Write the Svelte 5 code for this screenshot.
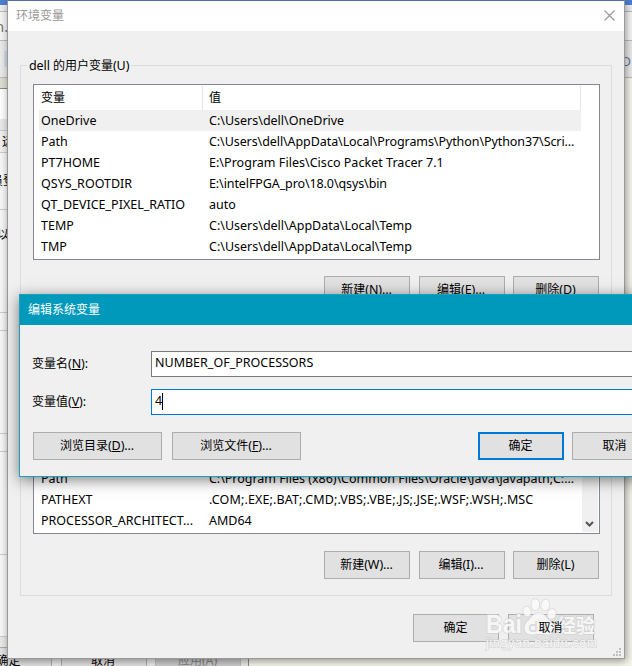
<script lang="ts">
	interface Variable {
		name: string;
		value: string;
		tracking?: number;
	}

	const userVars: Variable[] = [
		{ name: "OneDrive", value: "C:\\Users\\dell\\OneDrive" },
		{
			name: "Path",
			value: "C:\\Users\\dell\\AppData\\Local\\Programs\\Python\\Python37\\Scri...",
			tracking: -0.08,
		},
		{
			name: "PT7HOME",
			value: "E:\\Program Files\\Cisco Packet Tracer 7.1",
			tracking: 0.03,
		},
		{
			name: "QSYS_ROOTDIR",
			value: "E:\\intelFPGA_pro\\18.0\\qsys\\bin",
			tracking: -0.1,
		},
		{ name: "QT_DEVICE_PIXEL_RATIO", value: "auto" },
		{ name: "TEMP", value: "C:\\Users\\dell\\AppData\\Local\\Temp" },
		{ name: "TMP", value: "C:\\Users\\dell\\AppData\\Local\\Temp" },
	];

	const systemVars: Variable[] = [
		{
			name: "Path",
			value: "C:\\Program Files (x86)\\Common Files\\Oracle\\Java\\javapath;C:...",
			tracking: -0.03,
		},
		{
			name: "PATHEXT",
			value: ".COM;.EXE;.BAT;.CMD;.VBS;.VBE;.JS;.JSE;.WSF;.WSH;.MSC",
			tracking: 0.12,
		},
		{ name: "PROCESSOR_ARCHITECT...", value: "AMD64" },
	];

	let selected: number = $state(0);
</script>

{#snippet row(item: Variable)}
	<span class="cell name">{item.name}</span>
	<span class="cell" style="letter-spacing: {item.tracking ?? 0}px">
		{item.value}
	</span>
{/snippet}

<div class="screen">
	<div class="backdrop left">
		<div class="strip blue"></div>
		<div class="strip address">n.</div>
		<div class="strip tabs"><span class="chip"></span></div>
		<div class="strip olive"></div>
		<div class="strip caption"></div>
		<div class="strip grey"></div>
		<div class="strip tab">远</div>
		<div class="strip login">员登</div>
		<div class="strip allow">以</div>
		<div class="strip line space"></div>
		<div class="strip line gap"></div>
		<div class="strip line panel"></div>
		<div class="strip line gap"></div>
		<div class="strip line panel"></div>
		<div class="strip line rest"></div>
	</div>
	<div class="backdrop right">
		<div class="strip blue"></div>
		<div class="strip address"></div>
		<div class="strip tabs letter">D</div>
	</div>
	<div class="under">
		<button class="btn">确定</button>
		<button class="btn">取消</button>
		<button class="btn disabled">应用<i>(A)</i></button>
	</div>

	<div class="dialog">
		<header class="title">
			<span>环境变量</span>
			<svg width="11" height="11" viewBox="0 0 11 11">
				<path d="M.5 .5L10.500 10.500M10.500 .5L.5 10.500" stroke="#999" stroke-width="1.200" fill="none" />
			</svg>
		</header>
		<section class="group user">
			<h2><i>dell&nbsp;</i>的用户变量<i>(U)</i></h2>
			<div class="list">
				<div class="row head">
					<span class="cell name">变量</span>
					<span class="cell">值</span>
				</div>
				{#each userVars as item, i}
					<div
						class="row"
						class:selected={i === selected}
						role="presentation"
						onclick={() => (selected = i)}
					>
						{@render row(item)}
					</div>
				{/each}
			</div>
			<div class="actions">
				<button class="btn">新建<i>(N)...</i></button>
				<button class="btn">编辑<i>(E)...</i></button>
				<button class="btn">删除<i>(D)</i></button>
			</div>
		</section>
		<section class="group system">
			<div class="list scrolled">
				{#each systemVars as item}
					<div class="row">{@render row(item)}</div>
				{/each}
				<div class="scrollbar">
					<svg width="9" height="7" viewBox="0 0 9 7">
						<path d="M1 1L4.500 4.500L8 1" stroke="#555" stroke-width="2" fill="none" />
					</svg>
				</div>
			</div>
			<div class="actions">
				<button class="btn">新建<i>(W)...</i></button>
				<button class="btn">编辑<i>(I)...</i></button>
				<button class="btn">删除<i>(L)</i></button>
			</div>
		</section>
		<footer class="confirm">
			<button class="btn">确定</button>
			<button class="btn"><span class="above">取消</span></button>
		</footer>
		<svg class="grip" width="8" height="8" viewBox="0 0 8 8" fill="#bfbfbf">
			<path d="M6 0h2v2h-2zM3 3h2v2h-2zM6 3h2v2h-2zM0 6h2v2h-2zM3 6h2v2h-2zM6 6h2v2h-2z" />
		</svg>
	</div>

	<svg class="watermark" width="124" height="60" viewBox="0 0 124 60">
		<g fill="#fbfbfb" stroke="#d2d2d2" stroke-width="1.400" paint-order="stroke">
			<ellipse cx="42" cy="17.500" rx="3.800" ry="5" transform="rotate(-12 42 17.500)" />
			<ellipse cx="50.300" cy="10.500" rx="4" ry="5.500" />
			<ellipse cx="60.300" cy="11" rx="4" ry="5.500" transform="rotate(8 60 11)" />
			<ellipse cx="66.700" cy="20" rx="4" ry="5" transform="rotate(18 67 20)" />
			<path
				d="M54 19C48 19 46 24 42 28C38 32 39 40 45 40.500C49 41 51 40 55 40C60 40 63 41.500 67 39.500C72 36 70 31 66 28C61 25 60 19 54 19Z"
			/>
			<path
				d="M51 27V37H47C44 37 44 31 47 31H51M55 31V37H60V31"
				fill="none"
				stroke="#ddd"
				stroke-width="1.800"
			/>
			<text class="brand" x="1" y="39" textLength="36" lengthAdjust="spacingAndGlyphs">Bai</text>
			<text class="brand cn" x="72" y="39" textLength="38">经验</text>
			<text class="site" x="1" y="53" textLength="111">jingyan.baidu.com</text>
		</g>
	</svg>

	<div class="modal">
		<header>编辑系统变量</header>
		<div class="field">
			<span class="label">变量名<i>(<u>N</u>):</i></span>
			<div class="input">NUMBER_OF_PROCESSORS</div>
		</div>
		<div class="field">
			<span class="label">变量值<i>(<u>V</u>):</i></span>
			<div class="input focused">4<span class="caret"></span></div>
		</div>
		<div class="buttons">
			<button class="btn wide">浏览目录<i>(<u>D</u>)...</i></button>
			<button class="btn wide">浏览文件<i>(<u>F</u>)...</i></button>
			<button class="btn primary">确定</button>
			<button class="btn">取消</button>
		</div>
	</div>
</div>

<style>
	:global(body) {
		margin: 0;
		overflow: hidden;
	}

	.screen {
		position: relative;
		width: 632px;
		height: 666px;
		overflow: hidden;
		background: #f5f5eb;
		color: #000;
		font-family: "Noto Sans", "Noto Sans CJK SC", sans-serif;
		font-size: 12px;
		line-height: 16px;
	}

	.screen :global(*) {
		box-sizing: border-box;
	}

	i {
		font-style: normal;
		font-size: 12.5px;
		letter-spacing: -0.1px;
		white-space: pre;
	}

	u {
		text-underline-offset: 1px;
	}

	.backdrop {
		position: absolute;
		top: 0;
		width: 8px;
		height: 666px;
		overflow: hidden;
	}

	.left {
		left: 0;
		background: #f7f7f7;
	}

	.right {
		right: 0;
	}

	.strip {
		display: flex;
		justify-content: flex-start;
		align-items: center;
		white-space: nowrap;
	}

	.line {
		border-bottom: 1px solid #ccc;
	}

	.blue {
		height: 5px;
		background: #4b7fd0;
	}

	.address {
		height: 36px;
		border-bottom: 1px solid #bbb;
		background: linear-gradient(#eee 6px, #bbb 6px, #bbb 7px, #f5f5f5 7px);
		color: #777;
		font-size: 15px;
		text-indent: -5px;
		padding-top: 7px;
	}

	.tabs {
		height: 37px;
		border-bottom: 1px solid #bbb;
		background: #eaeaea;
	}

	.chip {
		width: 4px;
		height: 16px;
		margin-left: 4px;
		background: #d3d9e8;
	}

	.letter {
		padding: 3px 1px 0 0;
		justify-content: flex-end;
		color: #5b7599;
		font-size: 13px;
	}

	.olive {
		height: 11px;
		background: #dedfd3;
		border-bottom: 1px solid #888;
	}

	.caption {
		height: 30px;
		background: #fff;
	}

	.grey {
		height: 11px;
		background: #e9e9e9;
	}

	.tab {
		height: 23px;
		border: solid #ccc;
		border-width: 1px 0;
		padding-left: 2px;
		background: #f0f0f0;
	}

	.login {
		height: 57px;
		border-bottom: 1px solid #ccc;
		text-indent: -9px;
	}

	.allow {
		height: 50px;
		text-indent: -3px;
	}

	.space {
		height: 53px;
	}

	.gap {
		height: 18px;
	}

	.panel {
		height: 103px;
	}

	.rest {
		height: 82px;
	}

	.under {
		position: absolute;
		left: -34px;
		bottom: -10px;
		display: flex;
		gap: 8.5px;
		width: 283px;
		height: 39px;
		padding-top: 10px;
		background: #e9e9e9;
		border-right: 1px solid #888;
	}

	.dialog {
		position: absolute;
		left: 7px;
		top: 0;
		width: 618px;
		height: 659px;
		display: flex;
		flex-direction: column;
		background: #f0f0f0;
		border: 1px solid #999;
		border-top-color: #4f6fa5;
		box-shadow: 1px 2px 8px rgba(0, 0, 0, 0.4);
	}

	.title {
		display: flex;
		justify-content: space-between;
		align-items: center;
		height: 30px;
		padding: 0 9px 1px 8px;
		background: #fff;
		color: #999;
	}

	.group {
		margin: 34px 12px 0 12px;
		padding: 0 12px;
		border: 1px solid #dcdcdc;
	}

	.user {
		height: 249px;
	}

	.system {
		height: 266px;
		margin-top: 16px;
		padding-top: 27px;
	}

	h2 {
		width: max-content;
		height: 16px;
		margin: -8px 0 0 -6px;
		padding: 0 2px;
		background: #f0f0f0;
		font-size: 12px;
		font-weight: normal;
	}

	.list {
		position: relative;
		width: 567px;
		height: 176px;
		margin-top: 10px;
		padding-left: 5px;
		background: #fff;
		border: 1px solid #828790;
	}

	.scrolled {
		display: flex;
		flex-direction: column;
		justify-content: flex-end;
		margin-top: 0;
		padding-bottom: 2px;
	}

	.row {
		display: flex;
		align-items: center;
		width: 542px;
		height: 21px;
	}

	.row:not(.head) {
		font-size: 12.5px;
	}

	.head {
		height: 25px;
	}

	.head .cell {
		height: 24px;
		line-height: 24px;
		border-right: 1px solid #e5e5e5;
	}

	.selected {
		background: #f0f0f0;
	}

	.cell {
		flex: 1;
		padding-left: 6px;
		white-space: nowrap;
	}

	.name {
		flex: none;
		width: 164px;
		padding-left: 2px;
	}

	.scrollbar {
		position: absolute;
		right: 1px;
		bottom: 1px;
		width: 16px;
		height: 172px;
		display: flex;
		justify-content: center;
		align-items: flex-end;
		padding: 0 1px 4px 0;
		background: #f0f0f0;
	}

	.actions {
		display: flex;
		justify-content: flex-end;
		gap: 8.5px;
		margin-top: 16px;
	}

	.system .actions {
		margin-top: 17px;
	}

	.confirm {
		display: flex;
		justify-content: flex-end;
		gap: 9px;
		padding: 18px 30px 0 0;
	}

	.btn {
		flex: none;
		width: 86px;
		height: 28px;
		padding: 0 1px 0 0;
		border: 1px solid #adadad;
		background: #e1e1e1;
		color: #000;
		font: inherit;
		white-space: nowrap;
	}

	.disabled {
		background: #ccc;
		border-color: #bfbfbf;
		color: #838383;
	}

	.above {
		position: relative;
		z-index: 2;
	}

	.grip {
		position: absolute;
		right: 3px;
		bottom: 2px;
	}

	.modal {
		position: absolute;
		left: 19px;
		top: 294px;
		width: 660px;
		height: 183px;
		background: #f0f0f0;
		border: 1px solid #1a9fbf;
		box-shadow: 0 3px 14px rgba(0, 0, 0, 0.5);
	}

	.modal header {
		height: 30px;
		margin-bottom: 26px;
		padding-left: 8px;
		background: #0099bc;
		color: #fff;
		line-height: 30px;
	}

	.field {
		display: flex;
		align-items: center;
		height: 26px;
		margin-bottom: 12px;
		padding-left: 12px;
	}

	.label {
		width: 119px;
	}

	.input {
		display: flex;
		align-items: center;
		flex: 1;
		height: 26px;
		padding: 0 3px 2px;
		border: 1px solid #7a7a7a;
		background: #fff;
		font-size: 12.5px;
	}

	.focused {
		border-color: #0078d7;
	}

	.caret {
		width: 1px;
		height: 17px;
		background: #000;
	}

	.buttons {
		display: flex;
		padding: 5px 0 0 13px;
	}

	.wide {
		width: 129px;
		margin-right: 10px;
	}

	.primary {
		margin: 0 8px 0 167px;
		border: 2px solid #0078d7;
	}

	.watermark {
		position: absolute;
		z-index: 1;
		left: 485px;
		top: 594px;
		opacity: 0.85;
	}

	.brand {
		font-family: "Liberation Sans", sans-serif;
		font-size: 25px;
		font-weight: bold;
	}

	.cn {
		font-family: "Noto Sans CJK SC", sans-serif;
		font-size: 19px;
	}

	.site {
		font-family: "Liberation Sans", sans-serif;
		font-size: 12px;
	}
</style>
